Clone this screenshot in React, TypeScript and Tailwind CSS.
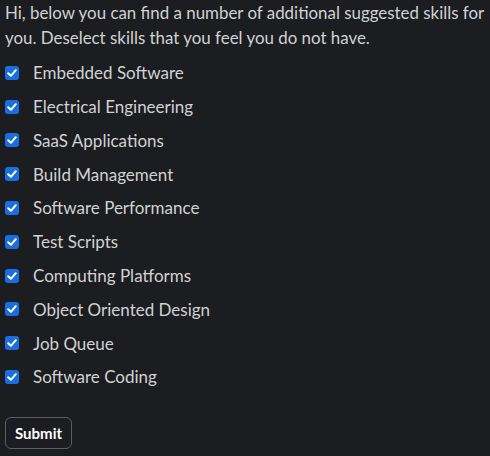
import { useState } from "react";

const SKILLS = [
  "Embedded Software",
  "Electrical Engineering",
  "SaaS Applications",
  "Build Management",
  "Software Performance",
  "Test Scripts",
  "Computing Platforms",
  "Object Oriented Design",
  "Job Queue",
  "Software Coding",
];

function Check({ on }: { on: boolean }) {
  return (
    <span className={`grid h-[14px] w-[14px] shrink-0 place-items-center rounded-[3px] ${on ? "bg-[#1a6fe0]" : "border border-[#8a8c90] bg-transparent"}`}>
      {on && (
        <svg viewBox="0 0 14 14" className="h-[14px] w-[14px]">
          <path d="M3.2 7.2 L5.9 9.8 L10.8 4.2" fill="none" stroke="#fff" strokeWidth="2" strokeLinecap="round" strokeLinejoin="round" />
        </svg>
      )}
    </span>
  );
}

export default function App() {
  const [checked, setChecked] = useState<Record<string, boolean>>(() => Object.fromEntries(SKILLS.map((s) => [s, true])));

  return (
    <div className="min-h-[456px] bg-[#1b1d21] pl-[5px] font-['Lato','Liberation_Sans',sans-serif] text-[#d1d2d3]">
      <p className="text-[16.9px] leading-[25px]">
        Hi, below you can find a number of additional suggested skills for you. Deselect skills that you feel you do not have.
      </p>
      <div className="mt-[6px] flex flex-col">
        {SKILLS.map((skill) => (
          <label key={skill} className="flex h-[33.8px] cursor-pointer items-center gap-[14px]" onClick={() => setChecked((c) => ({ ...c, [skill]: !c[skill] }))}>
            <Check on={checked[skill]} />
            <span className="text-[17px]">{skill}</span>
          </label>
        ))}
      </div>
      <button className="mt-[23px] h-[32px] rounded-[6px] border border-[#5c5e62] px-[9px] text-[15px] font-bold text-white">
        Submit
      </button>
    </div>
  );
}
